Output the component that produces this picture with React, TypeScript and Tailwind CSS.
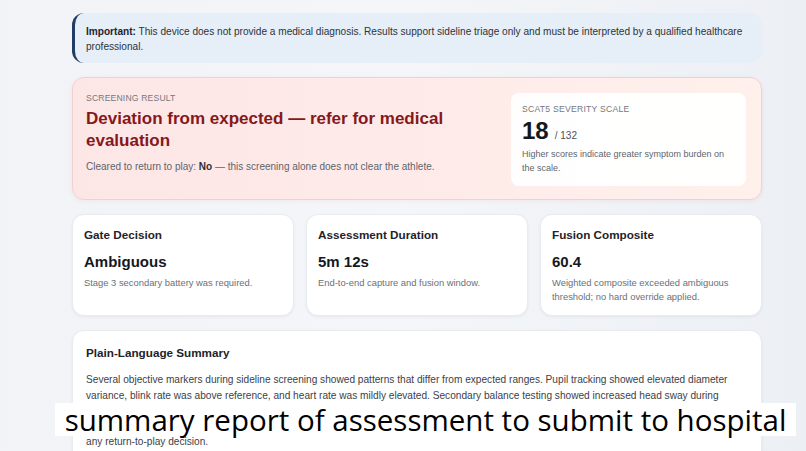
import React from "react";

const sans = "font-['Liberation_Sans',Arial,sans-serif]";

interface StatCardProps {
  title: string;
  value: string;
  note: string;
}

function StatCard({ title, value, note }: StatCardProps) {
  return (
    <div className="flex-1 h-[102px] bg-white rounded-xl border border-[#e8ebf0] shadow-[0_1px_3px_rgba(15,23,42,0.06)] px-[11px] pt-[12px]">
      <div className="text-[11.7px] font-bold text-[#1f2328] leading-[16px]">{title}</div>
      <div className="mt-[9px] text-[15px] font-bold text-[#15181c] leading-[20px]">{value}</div>
      <div className="mt-[4px] text-[9.4px] text-[#6b7078] leading-[14px]">{note}</div>
    </div>
  );
}

export default function App() {
  return (
    <div className={`${sans} relative w-[806px] h-[451px] overflow-hidden bg-gradient-to-r from-[#f1f3f7] via-[#f4f6f9] to-[#eceff4]`}>
      <div className="w-[690px] ml-[72px] pt-[13px] flex flex-col gap-[14px]">
        {/* disclaimer */}
        <div className="h-[50px] rounded-xl border-l-[3px] border-[#1f3d66] bg-[#e6eef7] pl-[11px] pr-4 pt-[11px] text-[10.1px] leading-[15px] text-[#2b3440]">
          <span className="font-bold text-[#1d2530]">Important:</span> This device does not provide a medical diagnosis. Results support sideline triage only and must be interpreted by a qualified healthcare professional.
        </div>

        {/* screening result */}
        <div className="h-[123px] rounded-xl border border-[#f4cfcf] bg-gradient-to-r from-[#fde6e6] to-[#fff0ec] shadow-[0_1px_4px_rgba(200,80,80,0.08)] flex justify-between pl-[13px] pr-[15px] pt-[14px]">
          <div className="w-[380px]">
            <div className="text-[8.6px] tracking-[0.02em] text-[#737880] leading-[12px]">SCREENING RESULT</div>
            <div className="mt-[4px] text-[17px] font-bold text-[#85181b] leading-[22px]">
              Deviation from expected — refer for medical evaluation
            </div>
            <div className="mt-[8px] text-[10px] text-[#5f646b] leading-[14px]">
              Cleared to return to play: <span className="font-bold text-[#2a3038]">No</span> — this screening alone does not clear the athlete.
            </div>
          </div>
          <div className="w-[235px] h-[93px] mt-[1px] rounded-lg bg-white/95 px-[11px] pt-[10px]">
            <div className="text-[8.6px] tracking-[0.03em] text-[#737880] leading-[12px]">SCAT5 SEVERITY SCALE</div>
            <div className="flex items-baseline gap-[6px] mt-[2px]">
              <span className="text-[24px] font-bold text-[#15181c] leading-[28px]">18</span>
              <span className="text-[10px] text-[#4a5058]">/ 132</span>
            </div>
            <div className="mt-[2px] text-[9px] text-[#60656c] leading-[14px]">
              Higher scores indicate greater symptom burden on the scale.
            </div>
          </div>
        </div>

        {/* stat cards */}
        <div className="flex gap-3">
          <StatCard title="Gate Decision" value="Ambiguous" note="Stage 3 secondary battery was required." />
          <StatCard title="Assessment Duration" value="5m 12s" note="End-to-end capture and fusion window." />
          <StatCard title="Fusion Composite" value="60.4" note="Weighted composite exceeded ambiguous threshold; no hard override applied." />
        </div>

        {/* summary */}
        <div className="h-[140px] bg-white rounded-xl border border-[#e8ebf0] shadow-[0_1px_3px_rgba(15,23,42,0.06)] px-[13px] pt-[14px]">
          <div className="text-[11.7px] font-bold text-[#1f2328] leading-[16px]">Plain-Language Summary</div>
          <p className="mt-[11px] text-[10.15px] text-[#3c4148] leading-[15.5px]">
            Several objective markers during sideline screening showed patterns that differ from expected ranges. Pupil tracking showed elevated diameter variance, blink rate was above reference, and heart rate was mildly elevated. Secondary balance testing showed increased head sway during tandem stance and eyes-closed conditions. Reaction-time and symptom self-report results fell within the ambiguous band, so the secondary battery was triggered. These results support, but do not replace, clinical judgement and should be reviewed by a qualified healthcare professional before any return-to-play decision.
          </p>
        </div>
      </div>

      {/* video caption overlay */}
      <div className="absolute left-[55px] top-[403px] w-[741px] h-[33px] bg-white flex items-center justify-center">
        <span className="font-['Open_Sans','Noto_Sans',sans-serif] text-[29.5px] leading-[33px] text-black whitespace-nowrap">
          summary report of assessment to submit to hospital
        </span>
      </div>
    </div>
  );
}
